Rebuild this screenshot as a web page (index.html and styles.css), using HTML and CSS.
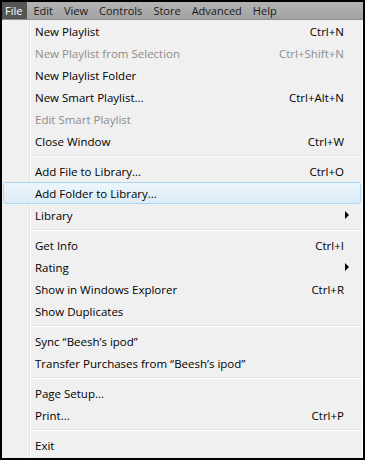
FILE: index.html
```html
<!DOCTYPE html>
<html lang="en">
<head>
  <meta charset="UTF-8" />
  <title>File menu</title>
  <link rel="stylesheet" href="styles.css">
</head>
<body>
  <div class="frame">
    <div class="menubar">
      <span class="top-item active">File</span>
      <span class="top-item">Edit</span>
      <span class="top-item">View</span>
      <span class="top-item">Controls</span>
      <span class="top-item">Store</span>
      <span class="top-item">Advanced</span>
      <span class="top-item">Help</span>
    </div>
    <div class="menu">
      <div class="item"><span>New Playlist</span><span class="key">Ctrl+N</span></div>
      <div class="item disabled"><span>New Playlist from Selection</span><span class="key">Ctrl+Shift+N</span></div>
      <div class="item"><span>New Playlist Folder</span></div>
      <div class="item"><span>New Smart Playlist...</span><span class="key">Ctrl+Alt+N</span></div>
      <div class="item disabled"><span>Edit Smart Playlist</span></div>
      <div class="item"><span>Close Window</span><span class="key">Ctrl+W</span></div>
      <div class="sep"></div>
      <div class="item"><span>Add File to Library...</span><span class="key">Ctrl+O</span></div>
      <div class="item hover"><span>Add Folder to Library...</span></div>
      <div class="item"><span>Library</span><span class="arrow"></span></div>
      <div class="sep"></div>
      <div class="item"><span>Get Info</span><span class="key">Ctrl+I</span></div>
      <div class="item"><span>Rating</span><span class="arrow"></span></div>
      <div class="item"><span>Show in Windows Explorer</span><span class="key">Ctrl+R</span></div>
      <div class="item"><span>Show Duplicates</span></div>
      <div class="sep"></div>
      <div class="item"><span>Sync “Beesh’s ipod”</span></div>
      <div class="item"><span>Transfer Purchases from “Beesh’s ipod”</span></div>
      <div class="sep"></div>
      <div class="item"><span>Page Setup...</span></div>
      <div class="item"><span>Print...</span><span class="key">Ctrl+P</span></div>
      <div class="sep"></div>
      <div class="item"><span>Exit</span></div>
    </div>
  </div>
</body>
</html>
```

FILE: styles.css
```css
html, body {
  margin: 0;
  padding: 0;
  background: #000;
}
.frame {
  width: 365px;
  height: 460px;
  box-sizing: border-box;
  border: 2px solid #000;
  background: #f0f0f0;
  font-family: "Open Sans", sans-serif;
  font-size: 11.5px;
  color: #000;
  overflow: hidden;
}
.menubar {
  height: 17px;
  display: flex;
  align-items: center;
  background: linear-gradient(#b4b4b4, #a2a2a2);
  border-bottom: 1px solid #8c8c8c;
  color: #1a1a1a;
  font-size: 11px;
}
.top-item {
  height: 17px;
  line-height: 17px;
  padding: 0 5px;
  margin-right: 1px;
}
.top-item.active {
  background: #555;
  color: #fff;
  padding-left: 3px;
}
.menu {
  height: 439px;
  box-sizing: border-box;
  border-right: 1px solid #fff;
  border-bottom: 1px solid #fff;
  background: linear-gradient(to right, #f0f0f0 27px, #e2e3e3 27px, #e2e3e3 28px, #fff 28px, #fff 29px, #f0f0f0 29px);
}
.item {
  height: 22px;
  display: flex;
  align-items: center;
  justify-content: space-between;
  padding: 0 17px 0 32px;
  margin: 0 1px;
  box-sizing: border-box;
}
.item.disabled {
  color: #8d8d8d;
}
.item.hover {
  border: 1px solid #a8d8f3;
  border-radius: 3px;
  padding-left: 31px;
  background: linear-gradient(#eef6fc, #dcebf6);
}
.key {
  text-align: right;
}
.arrow {
  width: 0;
  height: 0;
  border-left: 4px solid #000;
  border-top: 4px solid transparent;
  border-bottom: 4px solid transparent;
  margin-right: -5px;
}
.sep {
  height: 8px;
  margin-left: 29px;
  display: flex;
  flex-direction: column;
  justify-content: center;
}
.sep::before {
  content: "";
  height: 1px;
  background: #e2e3e3;
}
.sep::after {
  content: "";
  height: 1px;
  background: #fff;
}
```
